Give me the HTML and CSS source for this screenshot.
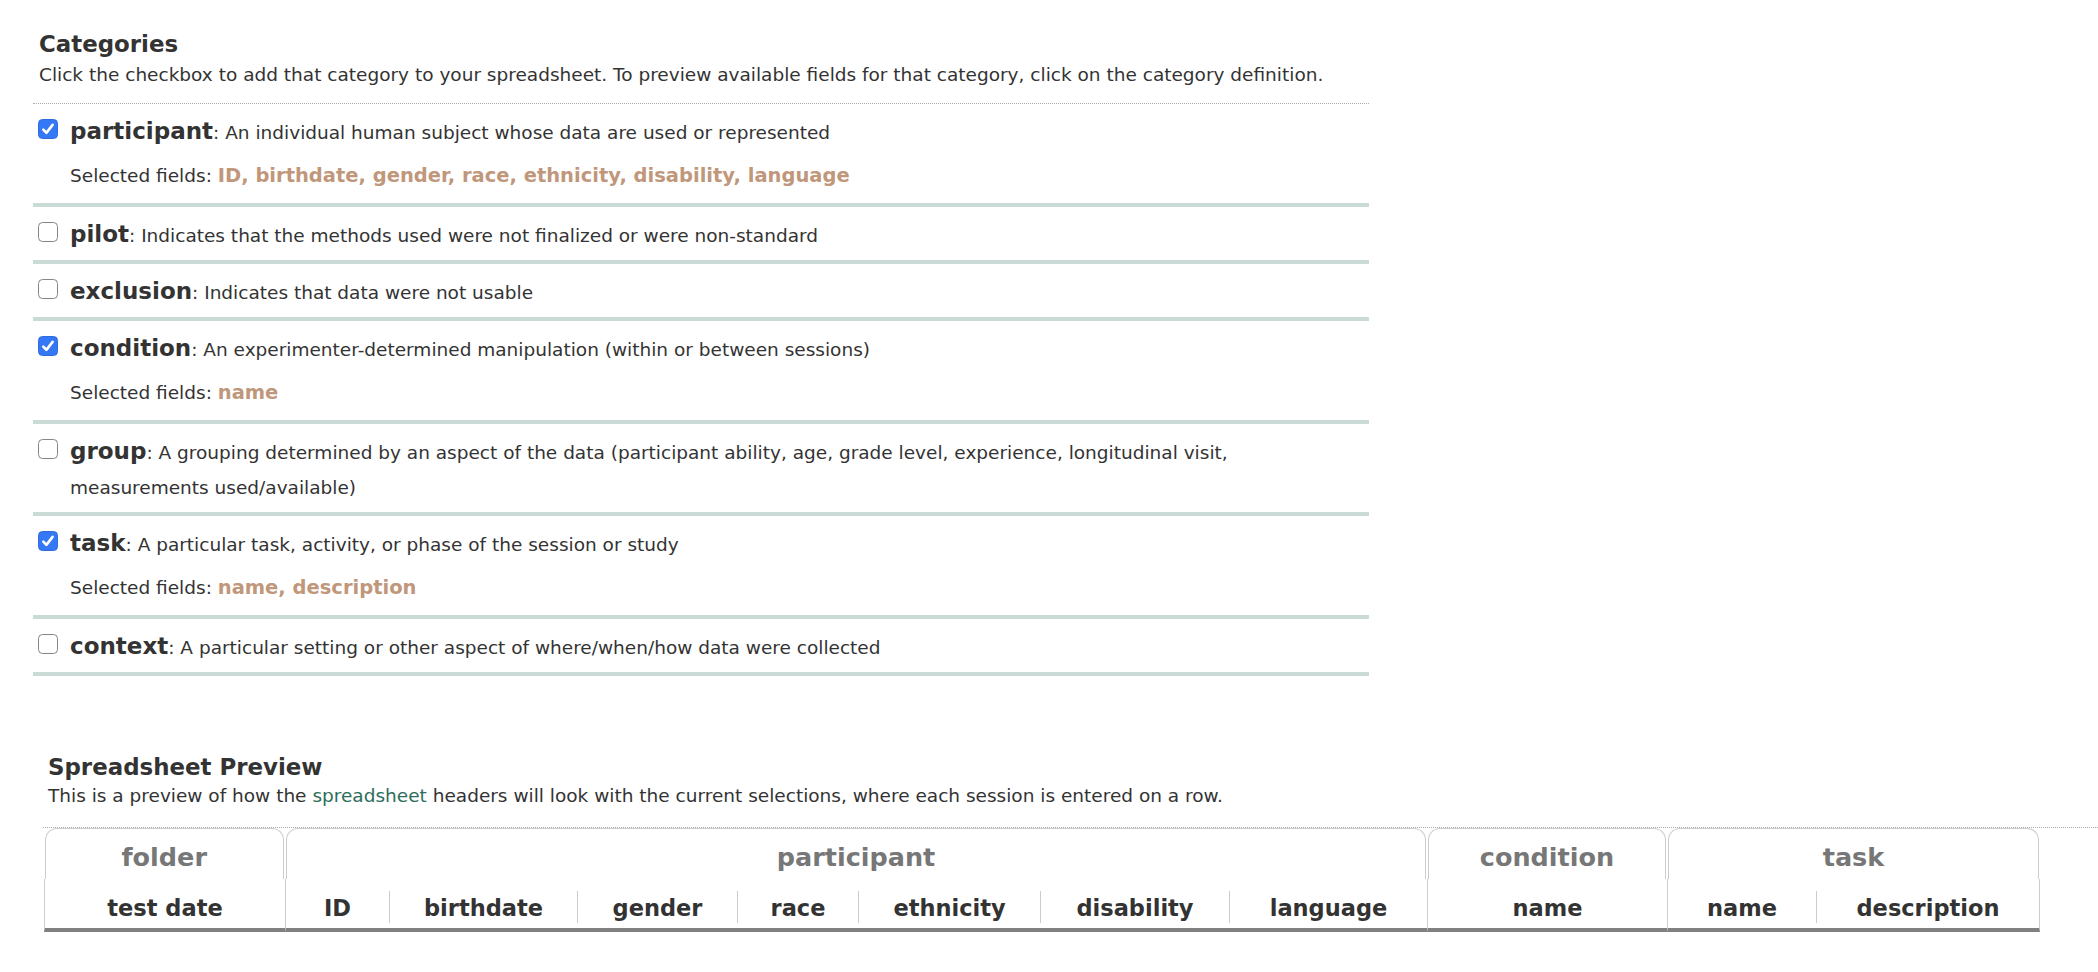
FILE: index.html
```html
<!DOCTYPE html>
<html lang="en">
<head>
<meta charset="utf-8">
<title>Categories</title>
<link rel="stylesheet" href="styles.css">
</head>
<body>
<section class="categories">
  <h2 class="title">Categories</h2>
  <p class="intro">Click the checkbox to add that category to your spreadsheet. To preview available fields for that category, click on the category definition.</p>

  <div class="cat">
    <span class="cb"><svg viewBox="0 0 20 20" width="20" height="20"><rect x="0.5" y="0.5" width="19" height="19" rx="4" fill="#3478f6" stroke="#2d6be0"/><path d="M5.3 10.6l3.1 3.3 6.2-8" fill="none" stroke="#fff" stroke-width="2.6" stroke-linecap="round" stroke-linejoin="round"/></svg></span>
    <div class="cat-body">
      <p class="cat-line"><b class="cat-name">participant</b><span class="cat-desc">: An individual human subject whose data are used or represented</span></p>
      <p class="selected"><span class="sel-label">Selected fields: </span><span class="sel-values">ID, birthdate, gender, race, ethnicity, disability, language</span></p>
    </div>
  </div>

  <div class="cat">
    <span class="cb"><svg viewBox="0 0 20 20" width="20" height="20"><rect x="0.5" y="0.5" width="19" height="19" rx="4" fill="#fff" stroke="#858585"/></svg></span>
    <div class="cat-body">
      <p class="cat-line"><b class="cat-name">pilot</b><span class="cat-desc">: Indicates that the methods used were not finalized or were non-standard</span></p>
    </div>
  </div>

  <div class="cat">
    <span class="cb"><svg viewBox="0 0 20 20" width="20" height="20"><rect x="0.5" y="0.5" width="19" height="19" rx="4" fill="#fff" stroke="#858585"/></svg></span>
    <div class="cat-body">
      <p class="cat-line"><b class="cat-name">exclusion</b><span class="cat-desc">: Indicates that data were not usable</span></p>
    </div>
  </div>

  <div class="cat">
    <span class="cb"><svg viewBox="0 0 20 20" width="20" height="20"><rect x="0.5" y="0.5" width="19" height="19" rx="4" fill="#3478f6" stroke="#2d6be0"/><path d="M5.3 10.6l3.1 3.3 6.2-8" fill="none" stroke="#fff" stroke-width="2.6" stroke-linecap="round" stroke-linejoin="round"/></svg></span>
    <div class="cat-body">
      <p class="cat-line"><b class="cat-name">condition</b><span class="cat-desc">: An experimenter-determined manipulation (within or between sessions)</span></p>
      <p class="selected"><span class="sel-label">Selected fields: </span><span class="sel-values">name</span></p>
    </div>
  </div>

  <div class="cat">
    <span class="cb"><svg viewBox="0 0 20 20" width="20" height="20"><rect x="0.5" y="0.5" width="19" height="19" rx="4" fill="#fff" stroke="#858585"/></svg></span>
    <div class="cat-body">
      <p class="cat-line"><b class="cat-name">group</b><span class="cat-desc">: A grouping determined by an aspect of the data (participant ability, age, grade level, experience, longitudinal visit,</span><br><span class="cat-desc">measurements used/available)</span></p>
    </div>
  </div>

  <div class="cat">
    <span class="cb"><svg viewBox="0 0 20 20" width="20" height="20"><rect x="0.5" y="0.5" width="19" height="19" rx="4" fill="#3478f6" stroke="#2d6be0"/><path d="M5.3 10.6l3.1 3.3 6.2-8" fill="none" stroke="#fff" stroke-width="2.6" stroke-linecap="round" stroke-linejoin="round"/></svg></span>
    <div class="cat-body">
      <p class="cat-line"><b class="cat-name">task</b><span class="cat-desc">: A particular task, activity, or phase of the session or study</span></p>
      <p class="selected"><span class="sel-label">Selected fields: </span><span class="sel-values">name, description</span></p>
    </div>
  </div>

  <div class="cat">
    <span class="cb"><svg viewBox="0 0 20 20" width="20" height="20"><rect x="0.5" y="0.5" width="19" height="19" rx="4" fill="#fff" stroke="#858585"/></svg></span>
    <div class="cat-body">
      <p class="cat-line"><b class="cat-name">context</b><span class="cat-desc">: A particular setting or other aspect of where/when/how data were collected</span></p>
    </div>
  </div>
</section>

<section class="preview">
  <h2 class="title">Spreadsheet Preview</h2>
  <p class="intro">This is a preview of how the <a class="link" href="#">spreadsheet</a> headers will look with the current selections, where each session is entered on a row.</p>
  <div class="sheet">
    <div class="tab t-folder">folder</div>
    <div class="tab t-participant">participant</div>
    <div class="tab t-condition">condition</div>
    <div class="tab t-task">task</div>

    <div class="col g"><span>test date</span></div>
    <div class="col g"><span>ID</span></div>
    <div class="col s"><span>birthdate</span></div>
    <div class="col s"><span>gender</span></div>
    <div class="col s"><span>race</span></div>
    <div class="col s"><span>ethnicity</span></div>
    <div class="col s"><span>disability</span></div>
    <div class="col s"><span>language</span></div>
    <div class="col g"><span>name</span></div>
    <div class="col g"><span>name</span></div>
    <div class="col s end"><span>description</span></div>
  </div>
</section>
</body>
</html>
```
FILE: styles.css
```css
* { box-sizing: border-box; }

body {
  margin: 0;
  font-family: "DejaVu Sans", "Liberation Sans", sans-serif;
  color: #333;
  background: #fff;
}

.categories {
  width: 1336px;
  margin-left: 33px;
  padding-top: 30px;
}

.title {
  margin: 0;
  padding-left: 6px;
  font-size: 22.9px;
  line-height: 28px;
  font-weight: 700;
  color: #333;
}

.intro {
  margin: 2px 0 0;
  padding: 0 0 13px 6px;
  font-size: 18.5px;
  line-height: 30px;
  border-bottom: 1px dotted #aaa;
}

.cat {
  display: flex;
  align-items: flex-start;
  padding: 11.1px 69px 6.9px 5px;
  border-bottom: 4px solid #cadbd7;
  font-size: 18.5px;
  line-height: 35px;
}

.cb {
  flex: none;
  display: block;
  width: 20px;
  height: 20px;
  margin: 3.9px 12px 0 0;
}

.cb svg { display: block; }

.cat-body {
  flex: 1;
  min-width: 0;
}

.cat-line { margin: 0; }

.cat-name {
  font-size: 23px;
  line-height: 1;
  font-weight: 700;
}

.selected {
  margin: 11.15px 0 4.85px;
  font-size: 19.5px;
  line-height: 30px;
}

.sel-label { font-size: 18.5px; }

.sel-values {
  font-weight: 700;
  color: #c0977b;
}

.preview {
  margin: 77px 0 0 43px;
}

.preview .title { padding-left: 5px; }

.preview .intro {
  margin-top: 0;
  padding: 0 0 16px 5px;
}

.link {
  color: #2d6e5b;
  text-decoration: none;
}

.sheet {
  display: grid;
  grid-template-columns: 241px 104px 188px 160px 121px 182px 189px 198px 240px 149px 224px;
  margin-left: 1px;
}

.tab {
  height: 51px;
  margin: 0 1px;
  padding: 8px 0 2px;
  border: 1px solid #ccc;
  border-bottom: 0;
  border-radius: 12px 12px 0 0;
  text-align: center;
  font-size: 25.5px;
  font-weight: 700;
  line-height: 40px;
  color: #777;
}

.t-folder { grid-column: 1 / 2; margin-left: 0.5px; }
.t-participant { grid-column: 2 / 9; }
.t-condition { grid-column: 9 / 10; }
.t-task { grid-column: 10 / 12; }

.col {
  height: 53px;
  padding: 12px 0 5px;
  border-bottom: 4px solid #808080;
  text-align: center;
  font-size: 22.5px;
  font-weight: 700;
  line-height: 30px;
  color: #333;
}

.col > span {
  display: block;
  height: 32px;
  padding-top: 2px;
}

.col.g { border-left: 1px solid #ccc; }
.col.end { border-right: 1px solid #ccc; }
.col.s > span { border-left: 1px solid #ccc; }
```
